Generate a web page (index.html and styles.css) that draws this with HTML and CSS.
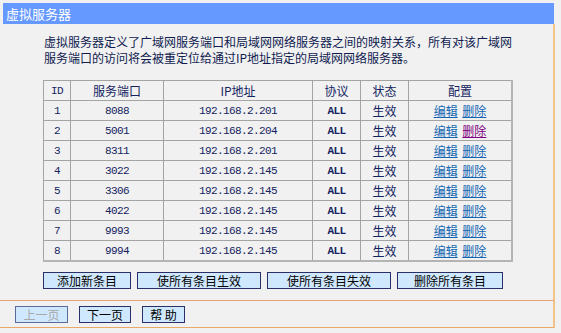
FILE: index.html
```html
<!DOCTYPE html>
<html lang="zh-CN">
<head>
    <meta charset="UTF-8">
    <title>虚拟服务器</title>
    <link rel="stylesheet" href="styles.css">
</head>
<body>
    <div class="frame">
        <!-- 标题栏 -->
        <div class="title">虚拟服务器</div>

        <div class="panel">
            <p class="intro">虚拟服务器定义了广域网服务端口和局域网网络服务器之间的映射关系，所有对该广域网<br>服务端口的访问将会被重定位给通过IP地址指定的局域网网络服务器。</p>

            <!-- 条目列表 -->
            <table class="list">
                <tr>
                    <th class="c-id mono">ID</th>
                    <th class="c-port">服务端口</th>
                    <th class="c-ip">IP地址</th>
                    <th class="c-proto">协议</th>
                    <th class="c-state">状态</th>
                    <th class="c-cfg">配置</th>
                </tr>
                <tr><td class="mono">1</td><td class="mono">8088</td><td class="mono">192.168.2.201</td><td class="mono b">ALL</td><td>生效</td><td><a href="#">编辑</a> <a href="#">删除</a></td></tr>
                <tr><td class="mono">2</td><td class="mono">5001</td><td class="mono">192.168.2.204</td><td class="mono b">ALL</td><td>生效</td><td><a href="#">编辑</a> <a href="#" class="visited">删除</a></td></tr>
                <tr><td class="mono">3</td><td class="mono">8311</td><td class="mono">192.168.2.201</td><td class="mono b">ALL</td><td>生效</td><td><a href="#">编辑</a> <a href="#">删除</a></td></tr>
                <tr><td class="mono">4</td><td class="mono">3022</td><td class="mono">192.168.2.145</td><td class="mono b">ALL</td><td>生效</td><td><a href="#">编辑</a> <a href="#">删除</a></td></tr>
                <tr><td class="mono">5</td><td class="mono">3306</td><td class="mono">192.168.2.145</td><td class="mono b">ALL</td><td>生效</td><td><a href="#">编辑</a> <a href="#">删除</a></td></tr>
                <tr><td class="mono">6</td><td class="mono">4022</td><td class="mono">192.168.2.145</td><td class="mono b">ALL</td><td>生效</td><td><a href="#">编辑</a> <a href="#">删除</a></td></tr>
                <tr><td class="mono">7</td><td class="mono">9993</td><td class="mono">192.168.2.145</td><td class="mono b">ALL</td><td>生效</td><td><a href="#">编辑</a> <a href="#">删除</a></td></tr>
                <tr><td class="mono">8</td><td class="mono">9994</td><td class="mono">192.168.2.145</td><td class="mono b">ALL</td><td>生效</td><td><a href="#">编辑</a> <a href="#">删除</a></td></tr>
            </table>

            <div class="actions">
                <button type="button" class="btn w-add">添加新条目</button>
                <button type="button" class="btn w-on">使所有条目生效</button>
                <button type="button" class="btn w-off">使所有条目失效</button>
                <button type="button" class="btn w-del">删除所有条目</button>
            </div>
        </div>

        <!-- 翻页 -->
        <div class="pager">
            <button type="button" class="btn w-prev" disabled>上一页</button>
            <button type="button" class="btn w-next">下一页</button>
            <button type="button" class="btn w-help">帮 助</button>
        </div>
    </div>
</body>
</html>
```

FILE: styles.css
```css
/* 页面基础 */
body {
    margin: 0;
    background-color: #f1f1f1;
    font-family: "Noto Sans CJK SC", "Liberation Sans", sans-serif;
    font-size: 12px;
    color: #14235f;
}

.mono {
    font-family: "Liberation Mono", "DejaVu Sans Mono", monospace;
    font-size: 11px;
    letter-spacing: -0.6px;
}

.frame {
    margin: 3px 0 0 3px;
    width: 552px;
}

/* 标题栏 */
.title {
    width: 548px;
    height: 21px;
    line-height: 21px;
    padding-left: 3px;
    background-color: #6699ff;
    color: #ffffff;
    font-size: 13px;
}

.panel {
    padding: 10px 0 11px 0;
    border-right: 2px solid #f3c488;
}

.intro {
    margin: 0;
    padding-left: 41px;
    line-height: 16px;
    white-space: nowrap;
    color: #101c50;
}

/* 表格 */
.list {
    margin: 14px 0 0 40px;
    width: 469px;
    border-collapse: collapse;
    table-layout: fixed;
    border-right: 2px solid #b4b4b4;
    border-bottom: 2px solid #b4b4b4;
}

.list th,
.list td {
    height: 19px;
    padding: 0;
    border: 1px solid #a4a4a4;
    text-align: center;
    font-weight: normal;
    line-height: 18px;
    color: #14235f;
}

.list td.b {
    font-weight: bold;
}

.c-id { width: 26px; }
.c-port { width: 92px; }
.c-ip { width: 148px; }
.c-proto { width: 47px; }
.c-state { width: 47px; }
.c-cfg { width: 102px; }

.list a {
    color: #1366b3;
    text-decoration: underline;
}

.list a + a {
    margin-left: 2px;
}

.list a.visited {
    color: #800080;
}

/* 按钮 */
.actions {
    display: flex;
    gap: 6px;
    margin: 10px 0 0 40px;
}

.btn {
    height: 17px;
    padding: 0;
    border: 1px solid #2a2f6a;
    background-color: #cfe8fe;
    font-family: "Noto Sans CJK SC", sans-serif;
    font-size: 12px;
    line-height: 15px;
    color: #000000;
}

.w-add { width: 88px; }
.w-on { width: 124px; }
.w-off { width: 124px; }
.w-del { width: 106px; }

/* 翻页区 */
.pager {
    display: flex;
    gap: 11px;
    margin-left: -3px;
    padding: 5px 0 4px 15px;
    border-top: 1px solid #e4a272;
    border-bottom: 1px solid #eaa866;
    border-right: 2px solid #f3c488;
}

.w-prev {
    width: 53px;
    color: #a8a8a8;
    border-color: #5a6a9a;
}

.w-next { width: 52px; }
.w-help { width: 43px; }
```
